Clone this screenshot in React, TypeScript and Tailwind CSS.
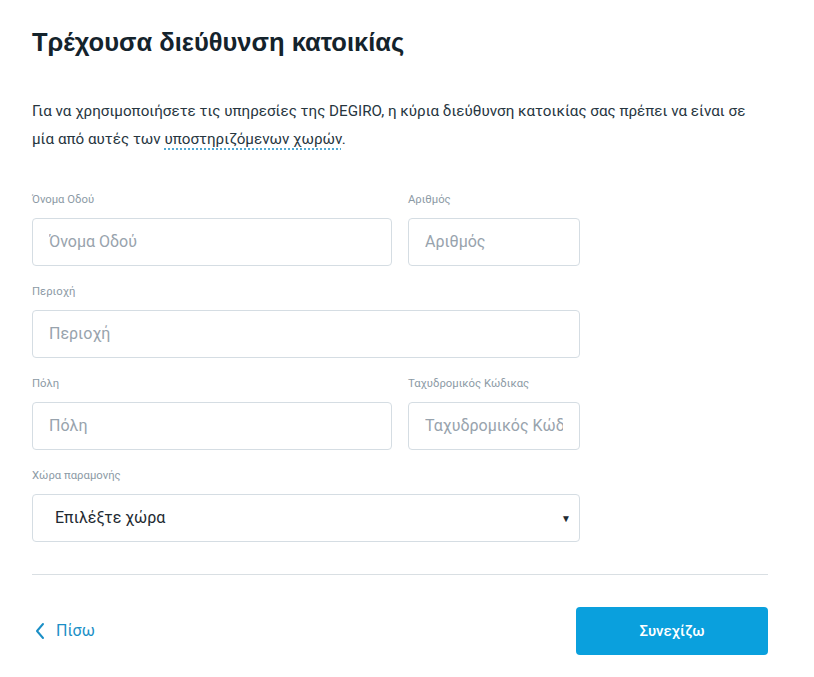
import React from "react";

function Field({ label, placeholder, className }: { label: string; placeholder: string; className: string }) {
  return (
    <div className={`flex flex-col ${className}`}>
      <label className="text-[11.3px] leading-[18px] text-[#8c9aa5] h-[18px] whitespace-nowrap">{label}</label>
      <div className="mt-[9px] h-[48px] rounded-[4px] border border-[#d5dde3] bg-white flex items-center px-[16px]">
        <span className="block flex-1 min-w-0 overflow-hidden text-[16px] text-[#98a3ad] whitespace-nowrap">{placeholder}</span>
      </div>
    </div>
  );
}

export default function App() {
  return (
    <div className="w-[814px] h-[677px] bg-white" style={{ fontFamily: "Roboto, 'Noto Sans', sans-serif" }}>
      <div className="pl-[32px] pr-[46px] pt-[26px]">
        <h1 className="text-[25.5px] leading-[32px] font-bold text-[#14232c]" style={{ fontFamily: "'Liberation Sans', Arial, sans-serif" }}>
          Τρέχουσα διεύθυνση κατοικίας
        </h1>
        <p className="mt-[39px] text-[15.2px] leading-[28px] text-[#27363f] w-[736px]">
          Για να χρησιμοποιήσετε τις υπηρεσίες της DEGIRO, η κύρια διεύθυνση κατοικίας σας πρέπει να είναι σε μία από αυτές των{" "}
          <span className="underline decoration-dotted decoration-[#1b8fc6] underline-offset-[5px]">υποστηριζόμενων χωρών</span>.
        </p>
        <div className="mt-[38px] w-[548px] flex flex-col gap-[17px]">
          <div className="flex gap-[16px]">
            <Field label="Όνομα Οδού" placeholder="Όνομα Οδού" className="w-[360px]" />
            <Field label="Αριθμός" placeholder="Αριθμός" className="w-[172px]" />
          </div>
          <Field label="Περιοχή" placeholder="Περιοχή" className="w-[548px]" />
          <div className="flex gap-[16px]">
            <Field label="Πόλη" placeholder="Πόλη" className="w-[360px]" />
            <Field label="Ταχυδρομικός Κώδικας" placeholder="Ταχυδρομικός Κώδικας" className="w-[172px]" />
          </div>
          <div className="flex flex-col">
            <label className="text-[11.3px] leading-[18px] text-[#8c9aa5] h-[18px]">Χώρα παραμονής</label>
            <div className="mt-[9px] h-[48px] rounded-[4px] border border-[#d5dde3] bg-white flex items-center justify-between pl-[22px] pr-[8px]">
              <span className="text-[16px] text-[#1e2a31]">Επιλέξτε χώρα</span>
              <span className="text-[10px] text-[#1e2a31]">▼</span>
            </div>
          </div>
        </div>
        <div className="mt-[32px] h-px bg-[#d9dfe3] w-[736px]" />
        <div className="mt-[32px] w-[736px] flex items-center justify-between">
          <div className="flex items-center gap-[10px] text-[#1b8fc6] text-[16px] ml-[2px]">
            <svg width="12" height="18" viewBox="0 0 12 18" fill="none">
              <path d="M9 2L3 9l6 7" stroke="#1b8fc6" strokeWidth="2" strokeLinecap="round" strokeLinejoin="round" />
            </svg>
            <span>Πίσω</span>
          </div>
          <button className="w-[192px] h-[48px] rounded-[4px] bg-[#0aa0dd] text-white text-[15px] font-medium">
            Συνεχίζω
          </button>
        </div>
      </div>
    </div>
  );
}
